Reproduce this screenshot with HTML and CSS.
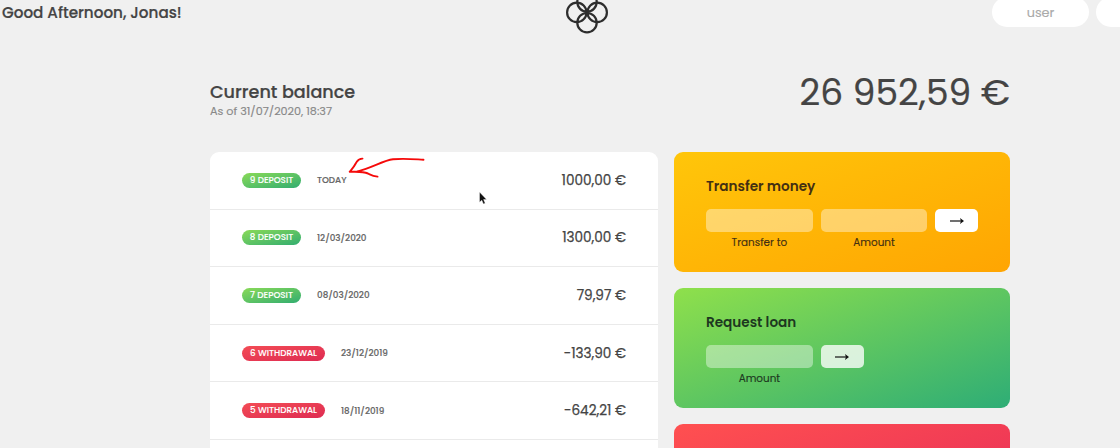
FILE: index.html
```html
<!DOCTYPE html>
<html lang="en">
<head>
<meta charset="utf-8">
<title>Bankist</title>
<link rel="stylesheet" href="styles.css">
</head>
<body>
<nav class="nav">
  <p class="welcome">Good Afternoon, Jonas!</p>
  <svg class="logo" width="44" height="36" viewBox="0 0 44 36" fill="none" stroke="#2d2d2d" stroke-width="2.2">
    <circle cx="22" cy="2" r="9.7"/><circle cx="11.8" cy="12.4" r="9.7"/><circle cx="32.2" cy="12.4" r="9.7"/><circle cx="22" cy="22.7" r="9.7"/>
  </svg>
  <div class="login"><div class="pill">user</div><div class="pill"></div></div>
</nav>
<main class="app">
  <section class="balance">
    <div>
      <h1 class="balance-label">Current balance</h1>
      <p class="balance-date">As of 31/07/2020, 18:37</p>
    </div>
    <p class="balance-value">26 952,59 €</p>
  </section>
  <div class="columns">
    <section class="movements">
      <div class="row"><span class="tag deposit">9 DEPOSIT</span><span class="date">TODAY</span><span class="value">1000,00 €</span></div>
      <div class="row"><span class="tag deposit">8 DEPOSIT</span><span class="date">12/03/2020</span><span class="value">1300,00 €</span></div>
      <div class="row"><span class="tag deposit">7 DEPOSIT</span><span class="date">08/03/2020</span><span class="value">79,97 €</span></div>
      <div class="row"><span class="tag withdrawal">6 WITHDRAWAL</span><span class="date">23/12/2019</span><span class="value">-133,90 €</span></div>
      <div class="row"><span class="tag withdrawal">5 WITHDRAWAL</span><span class="date">18/11/2019</span><span class="value">-642,21 €</span></div>
      <div class="row"></div>
    </section>
    <div class="operations">
      <section class="card transfer">
        <h2>Transfer money</h2>
        <div class="form">
          <div class="field"><div class="input"></div><span>Transfer to</span></div>
          <div class="field"><div class="input"></div><span>Amount</span></div>
          <div class="btn"><svg width="16" height="10" viewBox="0 0 16 10"><path d="M1 5H13" stroke="#111" stroke-width="1.2"/><path d="M11 2L15 5L11 8L11.9 5Z" fill="#111"/></svg></div>
        </div>
      </section>
      <section class="card loan">
        <h2>Request loan</h2>
        <div class="form">
          <div class="field"><div class="input"></div><span>Amount</span></div>
          <div class="btn soft"><svg width="16" height="10" viewBox="0 0 16 10"><path d="M1 5H13" stroke="#111" stroke-width="1.2"/><path d="M11 2L15 5L11 8L11.9 5Z" fill="#111"/></svg></div>
        </div>
      </section>
      <section class="card close"></section>
    </div>
  </div>
</main>
<svg class="arrow" width="80" height="24" viewBox="0 0 80 24" fill="none" stroke="#f50a0a" stroke-width="1.9" stroke-linecap="round" stroke-linejoin="round">
  <path d="M77.5 4.7C69 4.3 58 3.2 47 4.3C37 5.5 27 12.5 11 16.6M16.5 3.6C12 3.5 11.5 6 10 8C8 12 6 14 3.7 16.7C12 17 17 16.5 22 18.5C26 20.5 27 21.2 31.5 21.6"/>
</svg>
<svg class="cursor" width="10" height="14" viewBox="0 0 10 14"><path d="M1.5 1V11.2L3.8 9.2L5.4 12.9L7.2 12.2L5.6 8.6H8.6Z" fill="#111" stroke="#fff" stroke-width=".4"/></svg>
</body>
</html>
```
FILE: styles.css
```css
* { margin: 0; padding: 0; box-sizing: border-box; }
body {
  position: relative;
  width: 1120px;
  height: 448px;
  overflow: hidden;
  background: #f0f0f0;
  color: #444;
  font-family: Poppins, Inter, sans-serif;
}
.nav { display: grid; grid-template-columns: 565px 427px 1fr; height: 64px; overflow: hidden; }
.welcome { padding: 1px 0 0 2px; font-size: 15.2px; font-weight: 500; line-height: 24px; white-space: nowrap; -webkit-text-stroke: .2px; }
.login { display: flex; gap: 7px; margin-top: -3px; }
.pill { flex: none; width: 97px; height: 30px; border-radius: 15px; background: #fff; color: #aaa; font-size: 12.8px; line-height: 31px; text-align: center; -webkit-text-stroke: .15px; }
.app { width: 800px; margin-left: 210px; }
.balance { display: flex; justify-content: space-between; height: 88px; }
.balance-label { margin-top: 15px; font-size: 17.6px; font-weight: 500; line-height: 26px; white-space: nowrap; -webkit-text-stroke: .2px; }
.balance-date { color: #888; font-size: 11.2px; line-height: 13px; white-space: nowrap; -webkit-text-stroke: .15px; }
.balance-value { margin-top: 5px; font-size: 36px; line-height: 48px; white-space: nowrap; -webkit-text-stroke: .2px; }
.columns { display: grid; grid-template-columns: 448px 336px; gap: 16px; }
.movements { height: 296px; overflow: hidden; border-radius: 9px 9px 0 0; background: #fff; }
.row { display: flex; align-items: center; height: 57.6px; padding: 0 32px; border-bottom: 1px solid #eaeaea; white-space: nowrap; }
.tag { height: 15px; margin-right: 16px; border-radius: 8px; color: #fff; font-size: 8.8px; font-weight: 500; line-height: 15.5px; text-align: center; -webkit-text-stroke: .1px; }
.deposit { width: 59px; background: linear-gradient(to top left, #32ad70, #8ada58); }
.withdrawal { width: 83px; background: linear-gradient(to top left, #de2b52, #f34c55); }
.date { color: #666; font-size: 8.8px; font-weight: 500; line-height: 14px; -webkit-text-stroke: .15px; }
.value { margin-left: auto; padding-top: 1px; font-size: 13.6px; line-height: 20px; -webkit-text-stroke: .25px; }
.operations { display: grid; grid-auto-rows: 120px; gap: 16px; height: 296px; overflow: hidden; }
.card { padding: 24px 32px; border-radius: 9px; }
.transfer { background: linear-gradient(to top left, #ffa502, #ffc60a); color: #432f12; }
.loan { background: linear-gradient(to top left, #2ead76, #8fe04b); color: #1d3820; }
.close { background: linear-gradient(to top left, #e52a5a, #ff5050); }
.card h2 { height: 21px; margin-bottom: 12px; font-size: 13.6px; font-weight: 600; line-height: 21px; white-space: nowrap; }
.form { display: flex; gap: 8px; }
.field { display: flex; flex-direction: column; width: 106.7px; text-align: center; font-size: 10.4px; line-height: 21px; -webkit-text-stroke: .15px; }
.input { height: 23px; border-radius: 5px; background: rgba(255,255,255,.4); }
.btn { display: flex; align-items: center; justify-content: center; width: 43px; height: 23px; border-radius: 5px; background: #fff; }
.soft { background: rgba(255,255,255,.78); }
.arrow { position: absolute; left: 346px; top: 155px; }
.cursor { position: absolute; left: 478px; top: 191px; }
```
